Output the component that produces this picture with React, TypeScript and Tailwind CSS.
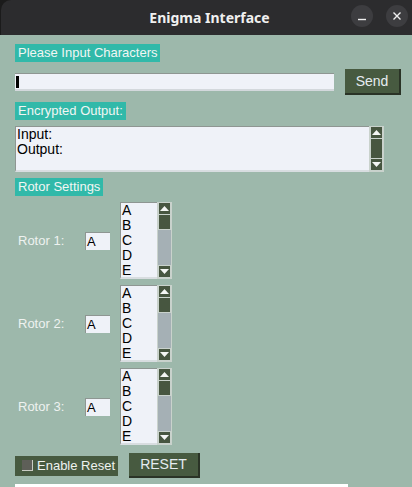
import React from 'react';

const ui = { fontFamily: '"Liberation Sans", Arial, sans-serif' };

const Label = ({ text }: { text: string }) => (
  <div className="w-fit h-[18px] px-[3px] bg-[#31b9a9] text-[#f2f6f4] text-[13px] leading-[18px]">
    {text}
  </div>
);

const Arrow = ({ up }: { up?: boolean }) => (
  <div className="h-[13px] shrink-0 bg-[#475640] border border-[#c9d2cc] flex items-center justify-center">
    <svg width="9" height="5" viewBox="0 0 9 5">
      {up ? <polygon points="0,5 9,5 4.5,0" fill="#f4f6f4" /> : <polygon points="0,0 9,0 4.5,5" fill="#f4f6f4" />}
    </svg>
  </div>
);

const Scrollbar = ({ slider }: { slider?: number }) => (
  <div className="w-[15px] h-full flex flex-col bg-[#c9d2cc] p-[1px] pt-0">
    <Arrow up />
    {slider ? (
      <>
        <div className="bg-[#475640] border border-[#c9d2cc] border-t-0" style={{ height: slider }} />
        <div className="flex-1 bg-[#a5b0b5]" />
      </>
    ) : (
      <div className="flex-1 bg-[#475640] border-x border-[#c9d2cc]" />
    )}
    <Arrow />
  </div>
);

const Rotor = ({ n }: { n: number }) => (
  <div className="flex items-center h-[77px]">
    <div className="w-[70px] pl-[3px] text-[13px] text-[#eef2f0]">Rotor {n}:</div>
    <div className="w-[25px] h-[18px] bg-[#eff2f8] border-t border-l border-[#8e9692] text-[13px] leading-[17px] pl-[1px] text-black">
      A
    </div>
    <div className="ml-[10px] flex h-[77px]">
      <div className="w-[37px] bg-[#eff2f8] border-t border-l border-[#8e9692] border-b-2 border-b-[#d8dde0] pl-[1px] text-[14px] leading-[15px] text-black">
        <div>A</div>
        <div>B</div>
        <div>C</div>
        <div>D</div>
        <div>E</div>
      </div>
      <Scrollbar slider={15} />
    </div>
  </div>
);

export default function App() {
  return (
    <div className="w-[412px] h-[487px] bg-[#9db8ab] flex flex-col overflow-hidden" style={ui}>
      <div className="h-[35px] shrink-0 bg-[#1b1b1b] flex">
        <div className="flex-1 ml-[1px] rounded-tl-[10px] bg-[#2c2c2e] flex items-center relative">
          <div
            className="flex-1 text-center text-[14px] font-bold text-[#f0f0f0] pl-[6px]"
            style={{ fontFamily: '"Noto Sans", "Open Sans", sans-serif' }}
          >
            Enigma Interface
          </div>
          <div className="absolute right-[4px] top-[5px] flex gap-[13px]">
            <div className="w-[22px] h-[22px] rounded-full bg-[#3d3d40] flex items-center justify-center">
              <svg width="10" height="10" viewBox="0 0 10 10">
                <line x1="1" y1="8.5" x2="9" y2="8.5" stroke="#f0f0f0" strokeWidth="1.4" />
              </svg>
            </div>
            <div className="w-[22px] h-[22px] rounded-full bg-[#3d3d40] flex items-center justify-center">
              <svg width="10" height="10" viewBox="0 0 10 10">
                <path d="M1.5 1.5 L8.5 8.5 M8.5 1.5 L1.5 8.5" stroke="#f0f0f0" strokeWidth="1.4" />
              </svg>
            </div>
          </div>
        </div>
      </div>

      <div className="flex flex-col shrink-0 pl-[15px] pt-[9px]">
        <Label text="Please Input Characters" />

        <div className="flex items-center mt-[7px] h-[26px]">
          <div className="w-[319px] h-[18px] bg-[#eff2f8] border-t border-[#8e9692] border-b-2 border-b-[#d3d8dc] flex items-center pl-[1px]">
            <div className="w-[3px] h-[12px] bg-black" />
          </div>
          <button className="ml-[11px] w-[56px] h-[26px] bg-[#475a40] border-r-2 border-b-2 border-[#2a3326] text-[#e6ecf0] text-[14px]">
            Send
          </button>
        </div>

        <div className="mt-[7px]">
          <Label text="Encrypted Output:" />
        </div>

        <div className="flex mt-[6px] h-[46px]">
          <div className="w-[354px] bg-[#eff2f8] border-t border-l border-[#8e9692] border-b-2 border-b-[#d8dde0] pl-[1px] text-[14px] leading-[15px] text-black">
            <div>Input:</div>
            <div>Output:</div>
          </div>
          <Scrollbar />
        </div>

        <div className="mt-[6px]">
          <Label text="Rotor Settings" />
        </div>

        <div className="flex flex-col gap-[6px] mt-[6px]">
          <Rotor n={1} />
          <Rotor n={2} />
          <Rotor n={3} />
        </div>

        <div className="flex items-center mt-[8px] h-[25px]">
          <div className="w-[103px] h-[20px] bg-[#475a40] flex items-center pl-[7px] gap-[4px]">
            <div className="w-[11px] h-[11px] bg-[#5e5f58] border-r border-b border-[#c9ccc4]" />
            <span className="text-[13px] text-[#eef2f0]">Enable Reset</span>
          </div>
          <button className="ml-[11px] w-[71px] h-[25px] bg-[#475a40] border-r-2 border-b-2 border-[#2a3326] text-[#e6ecf0] text-[14px]">
            RESET
          </button>
        </div>

        <div className="mt-[6px] w-[333px] h-[3px] bg-white" />
      </div>
    </div>
  );
}
